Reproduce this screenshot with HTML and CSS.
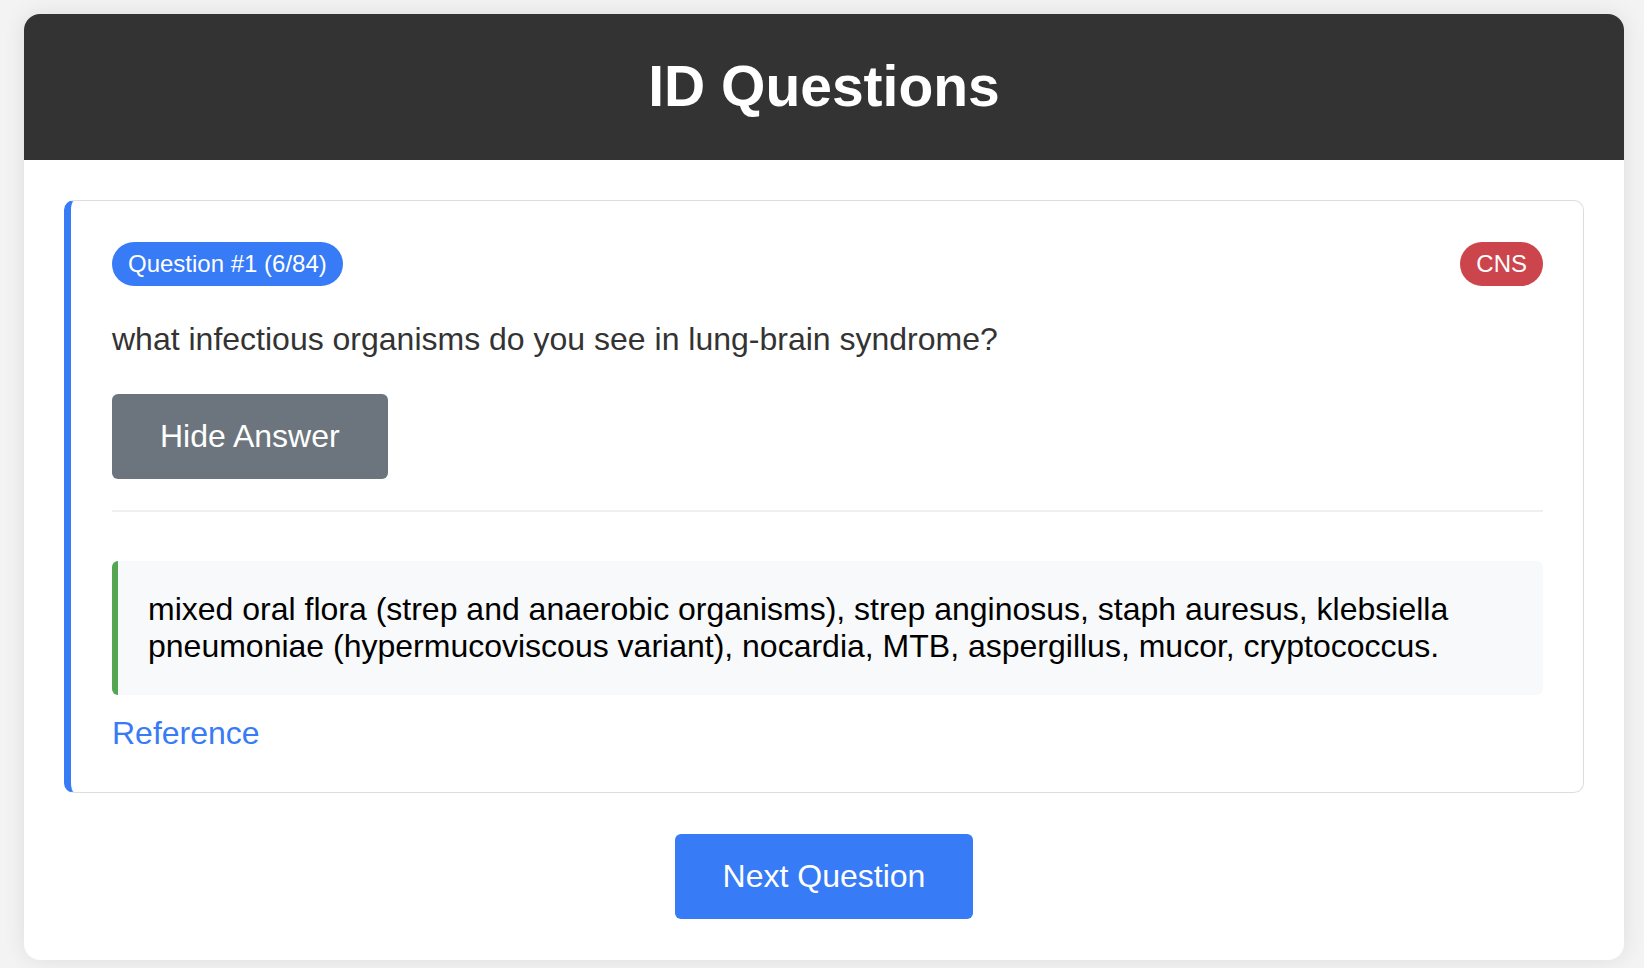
FILE: index.html
```html
<!DOCTYPE html>
<html lang="en">
<head>
<meta charset="utf-8">
<title>ID Questions</title>
<link rel="stylesheet" href="styles.css">
</head>
<body>
<div class="app">
  <header class="app-header">
    <h1 class="app-title">ID Questions</h1>
  </header>
  <main class="app-body">
    <section class="question-card">
      <div class="question-meta">
        <span class="badge badge-blue">Question #1 (6/84)</span>
        <span class="badge badge-red">CNS</span>
      </div>
      <p class="question-text">what infectious organisms do you see in lung-brain syndrome?</p>
      <button class="btn btn-gray" type="button">Hide Answer</button>
      <div class="answer-section">
        <div class="answer-box">mixed oral flora (strep and anaerobic organisms), strep anginosus, staph auresus, klebsiella pneumoniae (hypermucoviscous variant), nocardia, MTB, aspergillus, mucor, cryptococcus.</div>
        <a class="reference-link" href="#">Reference</a>
      </div>
    </section>
    <div class="actions">
      <button class="btn btn-blue" type="button">Next Question</button>
    </div>
  </main>
</div>
</body>
</html>
```

FILE: styles.css
```css
* {
  box-sizing: border-box;
}

html, body {
  margin: 0;
  padding: 0;
}

body {
  background: #f3f3f3;
  font-family: "Liberation Sans", Arial, Helvetica, sans-serif;
  color: #333333;
  padding: 14px 0 8px 4px;
}

.app {
  width: 1600px;
  margin: 0 auto;
  background: #ffffff;
  border-radius: 16px;
  overflow: hidden;
  box-shadow: 0 0 22px rgba(0, 0, 0, 0.09);
}

.app-header {
  background: #333333;
  padding: 40px 20px 41px;
  text-align: center;
}

.app-title {
  margin: 0;
  color: #ffffff;
  font-size: 57px;
  font-weight: bold;
  line-height: 65px;
}

.app-body {
  padding: 40px 40px 41px;
}

.question-card {
  border: 1px solid #dddddd;
  border-left: 7px solid #377bf6;
  border-radius: 10px;
  padding: 41px 40px 40px 41px;
}

.question-meta {
  display: flex;
  justify-content: space-between;
  align-items: center;
}

.badge {
  display: inline-block;
  font-size: 24px;
  line-height: 28px;
  padding: 8px 16px;
  border-radius: 22px;
  color: #ffffff;
}

.badge-blue {
  background: #377bf6;
}

.badge-red {
  background: #cc454c;
}

.question-text {
  margin: 35px 0 36px;
  font-size: 32px;
  line-height: 37px;
  color: #333333;
}

.btn {
  display: inline-block;
  border: none;
  border-radius: 6px;
  font-family: "Liberation Sans", Arial, Helvetica, sans-serif;
  font-size: 32px;
  line-height: 37px;
  padding: 24px 48px;
  color: #ffffff;
  cursor: pointer;
}

.btn-gray {
  background: #6c757d;
}

.btn-blue {
  background: #377bf6;
}

.answer-section {
  margin-top: 31px;
  border-top: 2px solid #efefef;
  padding-top: 49px;
}

.answer-box {
  background: #f8f9fa;
  border-left: 6px solid #55a552;
  border-radius: 6px;
  padding: 30px;
  font-size: 32px;
  line-height: 37px;
  color: #000000;
}

.reference-link {
  display: inline-block;
  margin-top: 20px;
  font-size: 32px;
  line-height: 37px;
  color: #377bf6;
  text-decoration: none;
}

.actions {
  display: flex;
  justify-content: center;
  margin-top: 41px;
}
```
